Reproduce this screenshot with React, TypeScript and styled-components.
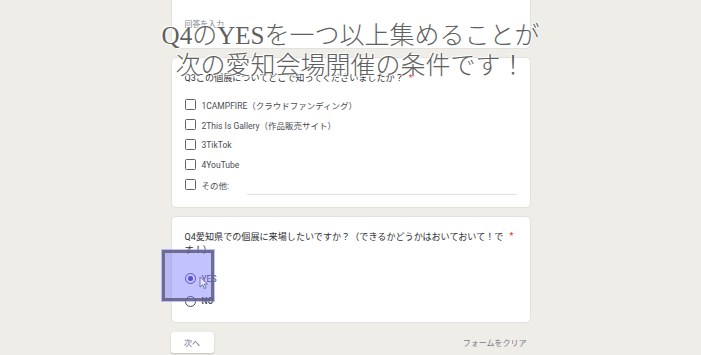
import styled, { createGlobalStyle } from "styled-components";

const GlobalStyle = createGlobalStyle`
    html, body {
        margin: 0;
        padding: 0;
        background: #efede7;
        overflow: hidden;
    }
    body {
        font-family: Roboto, "Noto Sans CJK JP", sans-serif;
    }
`;

const options = [
    "1CAMPFIRE（クラウドファンディング）",
    "2This Is Gallery（作品販売サイト）",
    "3TikTok",
    "4YouTube",
];

export default function App() {
    return (
        <Page>
            <GlobalStyle/>
            <Column>
                <Card pad="0 13px 0 13px" height="61px">
                    <Placeholder>回答を入力</Placeholder>
                </Card>

                <Card pad="14px 13px 0 13px" height="151px">
                    <Title>
                        Q3この個展についてどこで知ってくださいましたか？<Star>*</Star>
                    </Title>
                    <OptionList>
                        {options.map((o) => (
                            <OptionRow key={o}>
                                <Checkbox/>
                                <OptionLabel>{o}</OptionLabel>
                            </OptionRow>
                        ))}
                        <OptionRow>
                            <Checkbox/>
                            <OptionLabel>その他:</OptionLabel>
                            <OtherLine/>
                        </OptionRow>
                    </OptionList>
                </Card>

                <Card pad="14px 13px 0 13px" height="107px">
                    <TitleRow>
                        <WrapTitle>
                            Q4愛知県での個展に来場したいですか？（できるかどうかはおいておいて！です！）
                        </WrapTitle>
                        <Star>*</Star>
                    </TitleRow>
                    <RadioList>
                        <OptionRow>
                            <Radio checked/>
                            <OptionLabel>YES</OptionLabel>
                        </OptionRow>
                        <OptionRow>
                            <Radio/>
                            <OptionLabel bold>NO</OptionLabel>
                        </OptionRow>
                    </RadioList>
                </Card>

                <Footer>
                    <NextButton>次へ</NextButton>
                    <ClearLink>フォームをクリア</ClearLink>
                </Footer>
            </Column>

            <Caption>
                <div>Q4のYESを一つ以上集めることが</div>
                <div>次の愛知会場開催の条件です！</div>
            </Caption>

            <Highlight/>
            <Cursor width="10" height="14" viewBox="0 0 10 14">
                <path d="M1 1 L1 11 L3.6 8.6 L5.4 12.6 L7 11.9 L5.3 8 L8.6 8 Z"
                      fill="rgba(255,255,255,0.6)" stroke="#6a6aa0" strokeWidth="0.9"
                      strokeLinejoin="round"/>
            </Cursor>
        </Page>
    );
}

const Page = styled.div`
    position: relative;
    width: 701px;
    height: 355px;
    overflow: hidden;
`;

const Column = styled.div`
    width: 360px;
    margin: -12px auto 0;
    display: flex;
    flex-direction: column;
    gap: 8px;
`;

const Card = styled.div<{ pad: string; height: string }>`
    box-sizing: border-box;
    height: ${(p) => p.height};
    padding: ${(p) => p.pad};
    background: #fff;
    border: 1px solid #e2e1dc;
    border-radius: 5px;
    display: flex;
    flex-direction: column;
`;

const Placeholder = styled.div`
    margin-top: 29px;
    font-size: 7.9px;
    color: #80868b;
    font-family: "Noto Sans CJK JP", sans-serif;
`;

const Title = styled.div`
    font-size: 9.1px;
    line-height: 13px;
    color: #303134;
    font-family: Roboto, "Noto Sans CJK JP", sans-serif;
`;

const TitleRow = styled.div`
    display: flex;
    justify-content: space-between;
    align-items: flex-start;
`;

const WrapTitle = styled(Title)`
    width: 326px;
`;

const Star = styled.span`
    color: #d93025;
    font-size: 9px;
    margin-left: 5px;
    margin-right: 3px;
`;

const OptionList = styled.div`
    display: flex;
    flex-direction: column;
    gap: 8.5px;
    margin-top: 14px;
`;

const RadioList = styled(OptionList)`
    margin-top: 16px;
    gap: 11px;
`;

const OptionRow = styled.div`
    display: flex;
    align-items: center;
    gap: 6px;
    height: 11.5px;
`;

const Checkbox = styled.span`
    box-sizing: border-box;
    width: 11px;
    height: 11px;
    border: 1.3px solid #5f6368;
    border-radius: 1.5px;
    flex-shrink: 0;
`;

const Radio = styled.span<{ checked?: boolean }>`
    box-sizing: border-box;
    width: 11px;
    height: 11px;
    border-radius: 50%;
    border: 1.3px solid ${(p) => (p.checked ? "#4a3fa0" : "#4a4a60")};
    flex-shrink: 0;
    display: flex;
    align-items: center;
    justify-content: center;
    &::after {
        content: "";
        width: 5px;
        height: 5px;
        border-radius: 50%;
        background: ${(p) => (p.checked ? "#4a3fa0" : "transparent")};
    }
`;

const OptionLabel = styled.span<{ bold?: boolean }>`
    font-size: 8.5px;
    color: #4a4d52;
    font-weight: ${(p) => (p.bold ? 700 : 400)};
    font-family: Roboto, "Noto Sans CJK JP", sans-serif;
    white-space: nowrap;
`;

const OtherLine = styled.span`
    flex: 1;
    align-self: flex-end;
    margin: 0 0 -4px 12px;
    border-bottom: 1px solid #e0e0e0;
`;

const Footer = styled.div`
    display: flex;
    justify-content: space-between;
    align-items: center;
    margin-top: 1px;
`;

const NextButton = styled.button`
    width: 43px;
    height: 21px;
    padding: 0;
    background: #fff;
    border: none;
    border-radius: 3px;
    box-shadow: 0 1px 2px rgba(60, 64, 67, 0.25);
    color: #6f6790;
    font-size: 8px;
    font-family: "Noto Sans CJK JP", sans-serif;
`;

const ClearLink = styled.span`
    margin-right: 4px;
    color: #7c7891;
    font-size: 8px;
    font-family: "Noto Sans CJK JP", sans-serif;
`;

const Caption = styled.div`
    position: absolute;
    left: 0;
    right: 0;
    top: 21px;
    text-align: center;
    font-family: "Liberation Serif", "Noto Sans CJK JP", serif;
    font-size: 25px;
    font-weight: 300;
    line-height: 30px;
    color: #606060;
    text-shadow: 0 0 2px #fff, 0 0 2px #fff, 1px 1px 1px #fff, -1px -1px 1px #fff;
`;

const Highlight = styled.div`
    position: absolute;
    left: 162px;
    top: 250px;
    width: 52px;
    height: 51px;
    box-sizing: border-box;
    background: rgba(110, 110, 255, 0.42);
    border: 3px solid rgba(95, 95, 125, 0.85);
    box-shadow: 0 0 0 1px rgba(150, 150, 255, 0.6);
`;

const Cursor = styled.svg`
    position: absolute;
    left: 199px;
    top: 276px;
`;
